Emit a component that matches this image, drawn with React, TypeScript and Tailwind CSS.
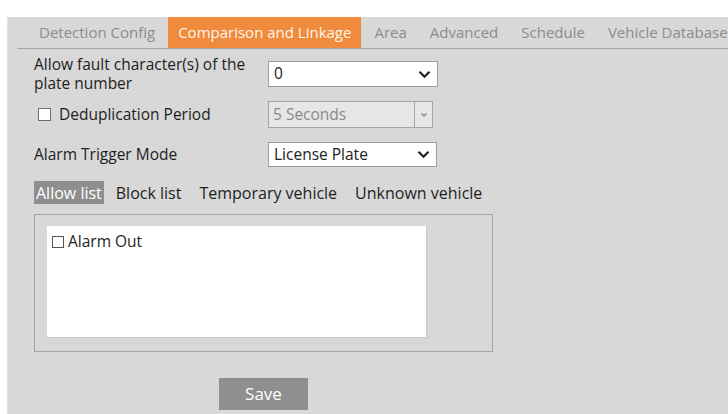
const TABS = ["Detection Config", "Comparison and Linkage", "Area", "Advanced", "Schedule", "Vehicle Database"]
const LISTS = ["Allow list", "Block list", "Temporary vehicle", "Unknown vehicle"]

function Chevron({ className = "" }: { className?: string }) {
  return (
    <svg width="13" height="9" viewBox="0 0 13 9" className={className}>
      <polyline points="1.5,1.8 6.5,6.8 11.5,1.8" fill="none" stroke="currentColor" strokeWidth="2.2" />
    </svg>
  )
}

function Select({ value, width }: { value: string; width: string }) {
  return (
    <div className={`${width} h-[26px] bg-white border border-[#9c9c9c] flex items-center justify-between pl-[5px] pr-[6px] text-[#222]`}>
      <span className="text-[15.5px]">{value}</span>
      <Chevron className="text-[#222]" />
    </div>
  )
}

export default function App() {
  return (
    <div className="w-[728px] h-[414px] bg-white pl-[7px] pt-[6px] overflow-hidden" style={{ fontFamily: '"Open Sans", "Noto Sans", sans-serif' }}>
      <div className="h-full bg-[#d8d8d8] pl-[9px] border-l border-[#e2e2e2]">
        {/* top tabs */}
        <div className="mt-[11px] h-[32px] border-b border-[#a3a3a3] flex items-stretch pl-[12px] gap-[3px] whitespace-nowrap">
          {TABS.map(t => (
            <div
              key={t}
              className={`px-[10px] flex items-center text-[15px] ${t === "Comparison and Linkage" ? "bg-[#f08a3c] text-[#fff6ec]" : "text-[#8c8c8c]"}`}
            >
              {t}
            </div>
          ))}
        </div>

        <div className="pl-[17px] text-[#1e1e1e] text-[15.5px]">
          {/* row 1 */}
          <div className="mt-[6px] h-[38px] flex items-center">
            <div className="w-[234px] flex flex-col">
              <span className="leading-[19px] whitespace-nowrap">Allow fault character(s) of the</span>
              <span className="leading-[19px]">plate number</span>
            </div>
            <Select value="0" width="w-[170px]" />
          </div>

          {/* row 2 */}
          <div className="mt-[8px] h-[27px] flex items-center">
            <div className="w-[234px] flex items-center">
              <span className="ml-[4px] w-[13px] h-[13px] bg-white border border-[#707070]" />
              <span className="ml-[8px]">Deduplication Period</span>
            </div>
            <div className="w-[165px] h-[27px] bg-[#e6e6e6] border border-[#a5a5a5] flex items-stretch">
              <span className="flex-1 flex items-center pl-[4px] text-[#8a8a8a]">5 Seconds</span>
              <span className="w-[18px] border-l border-[#a5a5a5] flex items-center justify-center">
                <svg width="8" height="6" viewBox="0 0 8 6">
                  <polyline points="1.5,1.5 4,4 6.5,1.5" fill="none" stroke="#8a8a8a" strokeWidth="1.5" />
                </svg>
              </span>
            </div>
          </div>

          {/* row 3 */}
          <div className="mt-[14px] h-[25px] flex items-center">
            <div className="w-[234px]">Alarm Trigger Mode</div>
            <Select value="License Plate" width="w-[169px] !h-[25px]" />
          </div>

          {/* list tabs */}
          <div className="mt-[14px] h-[23px] flex items-center text-[16px] whitespace-nowrap">
            {LISTS.map(l => (
              <div
                key={l}
                className={`h-full flex items-center ${l === "Allow list" ? "bg-[#8e8e8e] text-white px-[2px] mr-[12px]" : "mr-[18px]"}`}
              >
                {l}
              </div>
            ))}
          </div>

          {/* box */}
          <div className="mt-[10px] w-[459px] h-[138px] border border-[#a3a3a3] pl-[12px] pt-[11px]">
            <div className="w-[380px] h-[112px] bg-white border-r border-b border-[#cacaca] pl-[5px] pt-[4px]">
              <div className="flex items-center">
                <span className="w-[12px] h-[12px] border border-[#555]" />
                <span className="ml-[4px] text-[15.5px]">Alarm Out</span>
              </div>
            </div>
          </div>

          {/* save */}
          <div className="mt-[26px] ml-[185px] w-[89px] h-[32px] bg-[#8f8f8f] text-white flex items-center justify-center text-[17px]">
            Save
          </div>
        </div>
      </div>
    </div>
  )
}
